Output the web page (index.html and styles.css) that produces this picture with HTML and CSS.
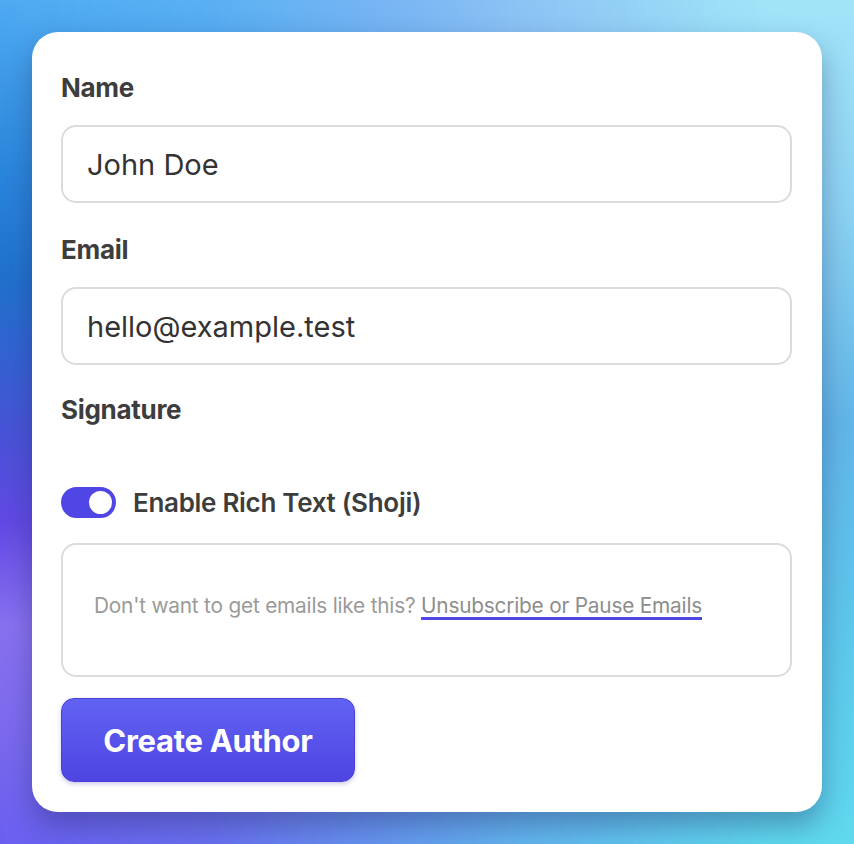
FILE: index.html
```html
<!DOCTYPE html>
<html>
<head>
<meta charset="utf-8">
<link rel="stylesheet" href="styles.css">
</head>
<body>
<div class="bg-left"></div>
<div class="card">
  <label class="label label-first">Name</label>
  <div class="input">John Doe</div>
  <label class="label">Email</label>
  <div class="input">hello@example.test</div>
  <label class="label label-sig">Signature</label>
  <div class="toggle-row">
    <span class="toggle"><span class="knob"></span></span>
    <span class="toggle-label">Enable Rich Text (Shoji)</span>
  </div>
  <div class="editor">
    <p class="editor-text">Don't want to get emails like this? <a class="link">Unsubscribe or Pause Emails</a></p>
  </div>
  <button class="btn">Create Author</button>
</div>
</body>
</html>
```
FILE: styles.css
```css
html, body {
  margin: 0;
  padding: 0;
}
body {
  position: relative;
  width: 854px;
  height: 844px;
  overflow: hidden;
  font-family: Inter, "Noto Sans", sans-serif;
  background:
    radial-gradient(ellipse 40% 30% at 45% 0%, rgba(170,190,245,0.9) 0%, rgba(170,190,245,0) 100%),
    linear-gradient(180deg, #a2e4f8 0%, #8cd2f2 25%, #62b6e8 50%, #5ec8ec 75%, #5fd9ee 100%);
}
.bg-left {
  position: absolute;
  inset: 0;
  background: linear-gradient(180deg, #4eaaf2 0%, #2a86dc 20%, #1f70cc 33%, #4a52d8 52%, #6248e4 62%, #8a70f0 74%, #7a68ee 88%, #6a5ef0 100%);
  -webkit-mask-image: linear-gradient(90deg, #000 0%, rgba(0,0,0,0.85) 25%, rgba(0,0,0,0.3) 60%, transparent 90%);
  mask-image: linear-gradient(90deg, #000 0%, rgba(0,0,0,0.85) 25%, rgba(0,0,0,0.3) 60%, transparent 90%);
}
.card {
  position: relative;
  margin: 32px 0 0 32px;
  width: 790px;
  box-sizing: border-box;
  background: #fff;
  border-radius: 26px;
  padding: 40px 30px 30px 29px;
  box-shadow: 0 14px 28px rgba(30, 30, 90, 0.35);
  display: flex;
  flex-direction: column;
  align-items: flex-start;
}
.label {
  display: block;
  margin-top: 31px;
  font-size: 26px;
  line-height: 32px;
  font-weight: 700;
  color: #3d3d3d;
  letter-spacing: -0.3px;
}
.label-first {
  margin-top: 0;
}
.label-sig {
  margin-top: 29px;
}
.input {
  margin-top: 21px;
  align-self: stretch;
  height: 78px;
  box-sizing: border-box;
  border: 2px solid #dcdcdc;
  border-radius: 15px;
  padding: 0 24px;
  display: flex;
  align-items: center;
  font-size: 29px;
  color: #333;
}
.toggle-row {
  margin-top: 61px;
  display: flex;
  align-items: center;
  gap: 17px;
}
.toggle {
  width: 55px;
  height: 31px;
  border-radius: 16px;
  background: #4f46e5;
  position: relative;
  display: block;
}
.knob {
  position: absolute;
  right: 4px;
  top: 4px;
  width: 23px;
  height: 23px;
  border-radius: 50%;
  background: #fff;
}
.toggle-label {
  font-size: 26px;
  font-weight: 600;
  color: #3d3d3d;
  letter-spacing: -0.3px;
}
.editor {
  margin-top: 25px;
  align-self: stretch;
  height: 134px;
  box-sizing: border-box;
  border: 2px solid #dcdcdc;
  border-radius: 15px;
  padding: 0 31px 10px;
  display: flex;
  align-items: center;
}
.editor-text {
  margin: 0;
  font-size: 20.8px;
  color: #9a9a9a;
  letter-spacing: -0.2px;
}
.link {
  color: #8d8d8d;
  text-decoration: underline;
  text-decoration-color: #4f46e5;
  text-decoration-thickness: 3px;
  text-underline-offset: 4px;
}
.btn {
  margin-top: 21px;
  width: 294px;
  height: 84px;
  border: 1px solid #4a40d8;
  border-radius: 13px;
  background: linear-gradient(180deg, #6163f3 0%, #4e44e2 100%);
  box-shadow: 0 2px 4px rgba(60, 50, 180, 0.25);
  color: #fff;
  font-family: Inter, "Noto Sans", sans-serif;
  font-size: 31px;
  font-weight: 700;
  letter-spacing: -0.3px;
  cursor: pointer;
}
```
